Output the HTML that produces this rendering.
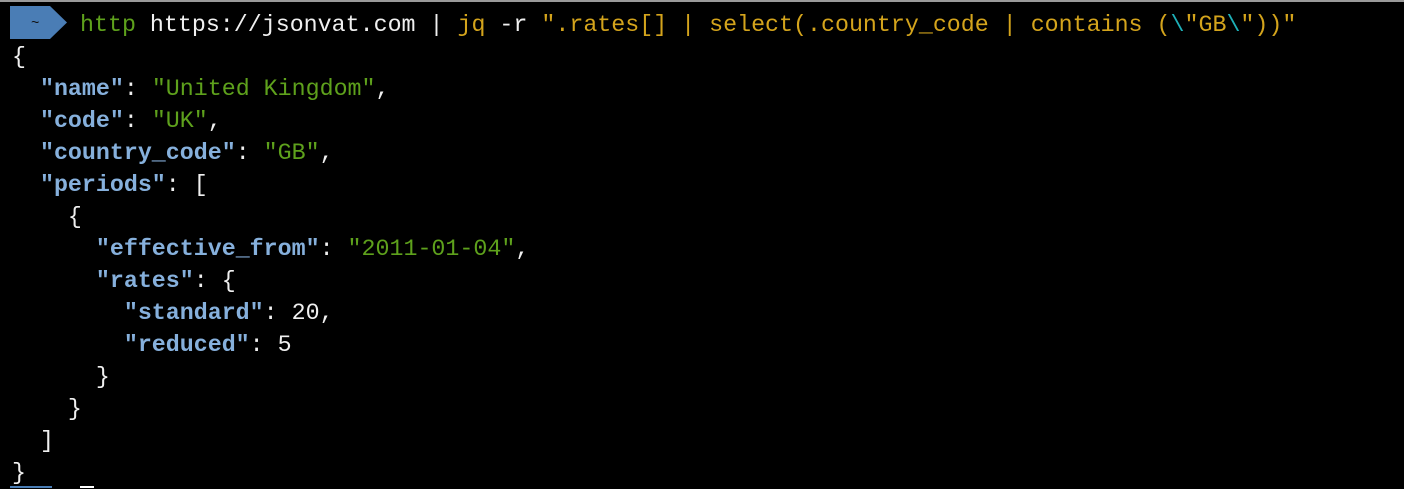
<!DOCTYPE html>
<html><head><style>
html,body{margin:0;padding:0;background:#000;width:1404px;height:488px;overflow:hidden}
.top{position:absolute;left:0;top:0;width:1404px;height:2px;background:#9a9a9a}
.t{position:absolute;left:12px;font-family:"Liberation Mono",monospace;font-size:23.3px;white-space:pre;color:#f0f0f0;line-height:32px}
.k{color:#86b0dc;font-weight:bold}
.s{color:#5ea11c}
.y{color:#d4a41c}
.c{color:#1eb0b8}
.g{color:#5ea11c}
</style></head><body>
<div class="top"></div>
<svg style="position:absolute;left:0;top:0" width="80" height="45">
<polygon points="10,6 50,6 67,22.5 50,39 10,39" fill="#4a7db5"/>
<text x="31" y="27" font-family="Liberation Mono" font-size="14" fill="#111">~</text>
</svg>
<div class="t" style="top:9px;left:80px"><span class="g">http</span> https://jsonvat.com | <span class="y">jq</span> -r <span class="y">".rates[] | select(.country_code | contains (<span class="c">\</span>"GB<span class="c">\</span>"))"</span></div>
<div class="t" style="top:41px">{
  <span class="k">"name"</span>: <span class="s">"United Kingdom"</span>,
  <span class="k">"code"</span>: <span class="s">"UK"</span>,
  <span class="k">"country_code"</span>: <span class="s">"GB"</span>,
  <span class="k">"periods"</span>: [
    {
      <span class="k">"effective_from"</span>: <span class="s">"2011-01-04"</span>,
      <span class="k">"rates"</span>: {
        <span class="k">"standard"</span>: 20,
        <span class="k">"reduced"</span>: 5
      }
    }
  ]
}</div>
<div style="position:absolute;left:10px;top:486px;width:42px;height:2px;background:#4a7db5"></div>
<div style="position:absolute;left:80px;top:486px;width:14px;height:2px;background:#fff"></div>
</body></html>
